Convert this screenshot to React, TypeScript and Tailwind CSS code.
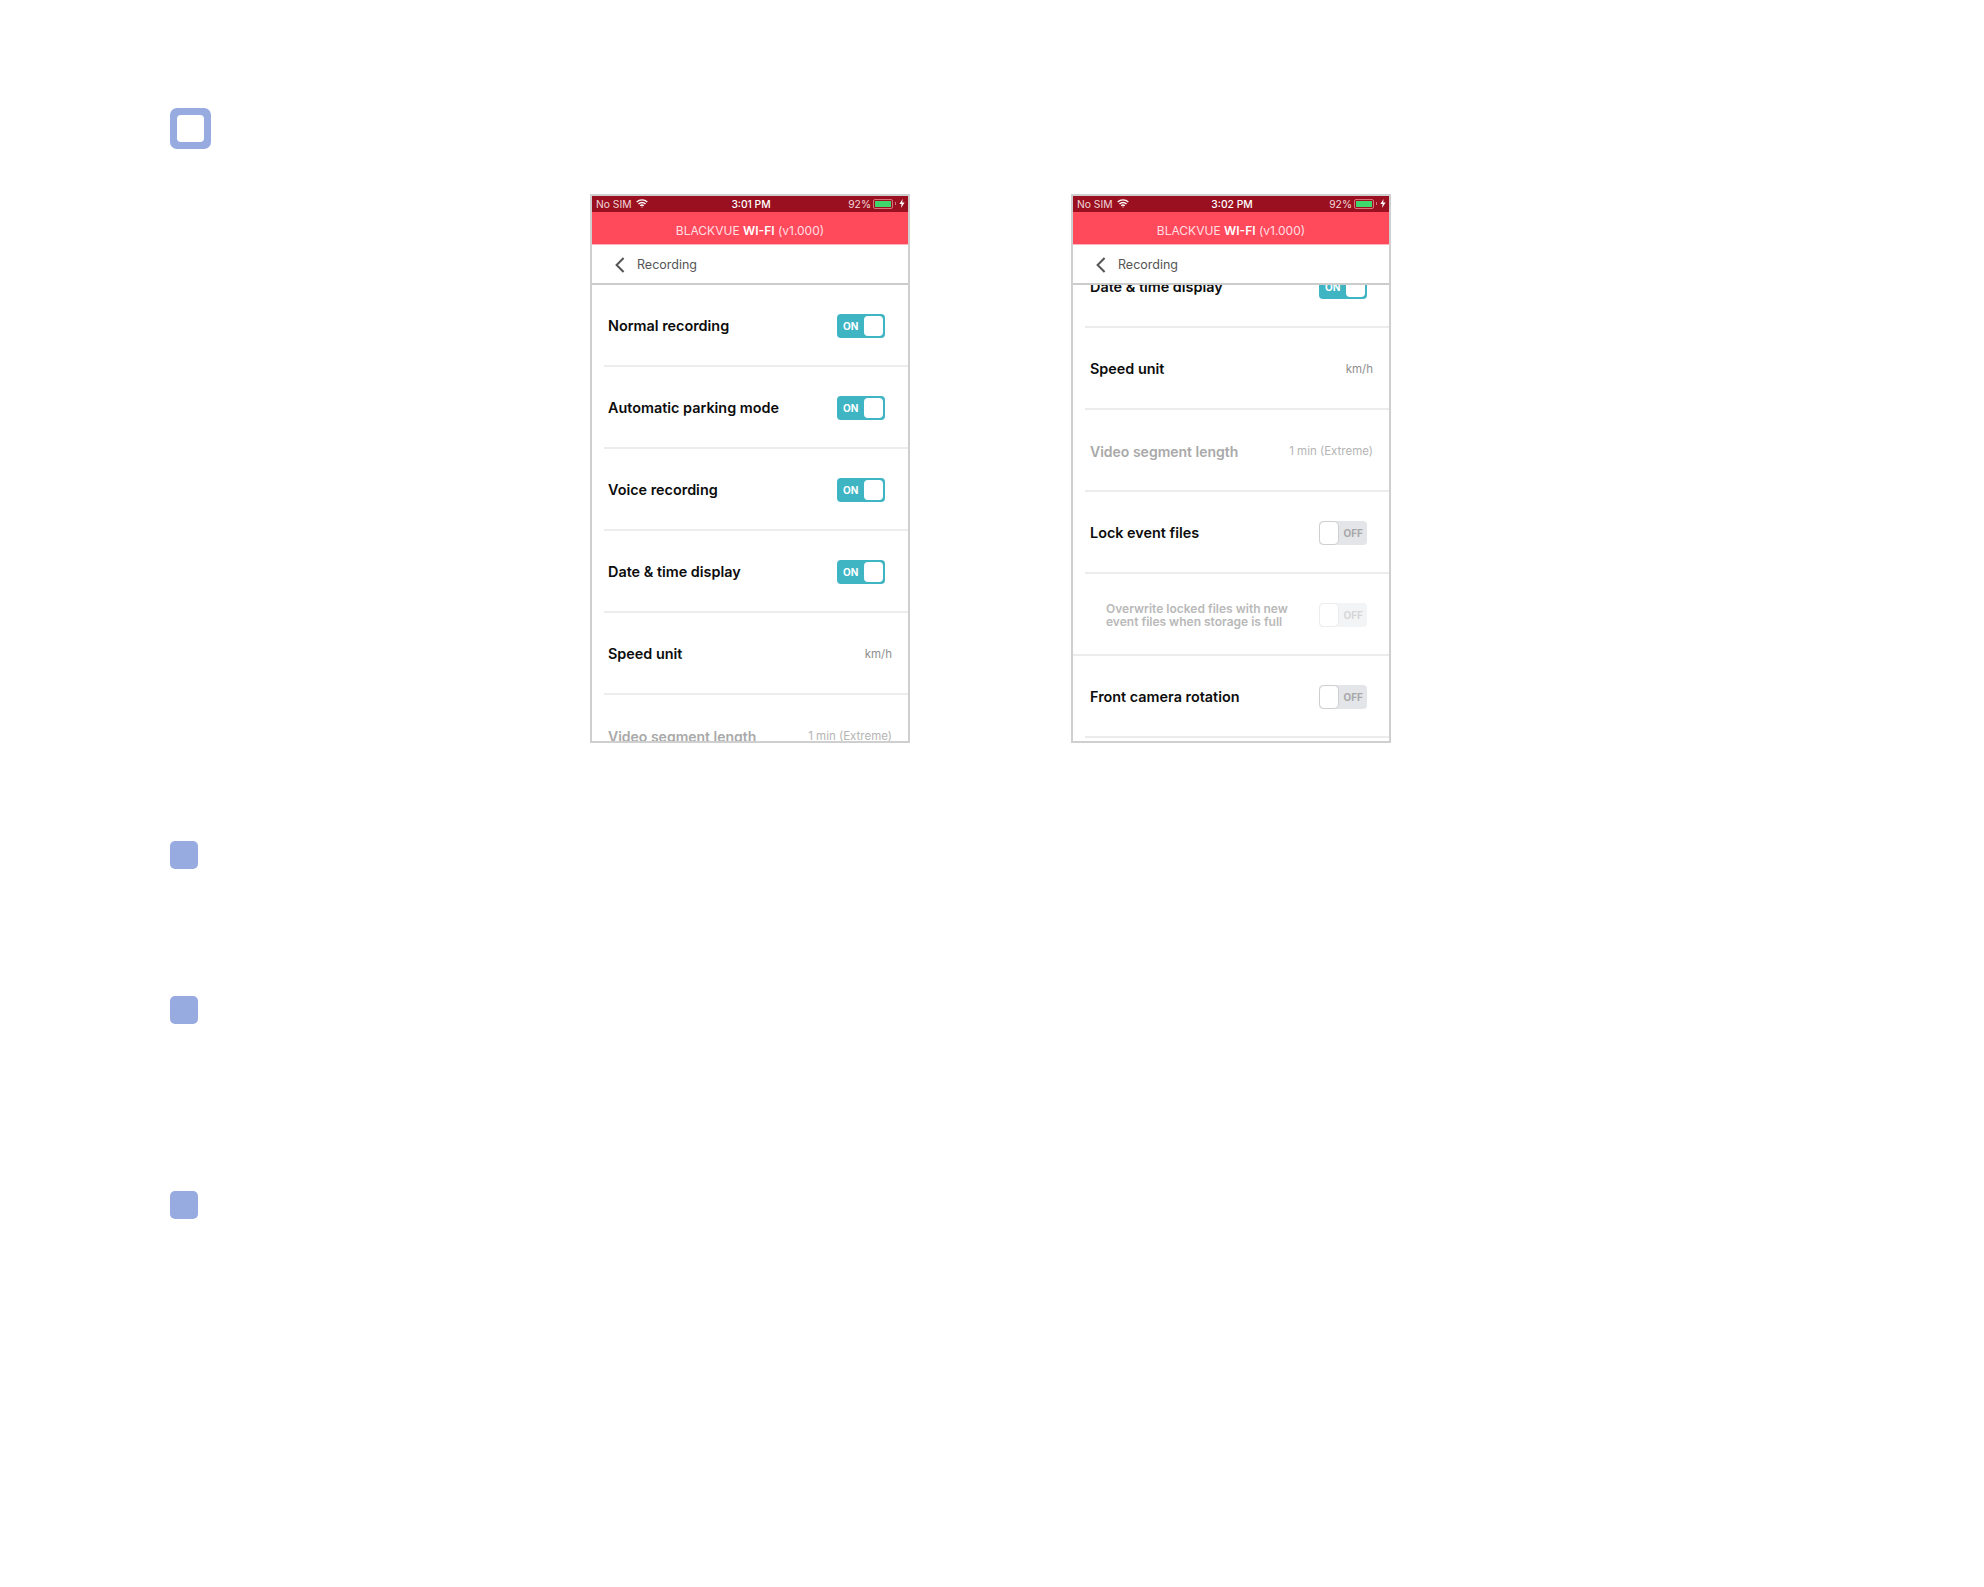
import React from 'react';

function Toggle({ on, dim }: { on: boolean; dim?: boolean }) {
  if (on) {
    return (
      <div className="flex h-6 w-12 shrink-0 items-center justify-between rounded-[4px] bg-[#3fb5c4] p-[2px] pl-[6px]">
        <span className="text-[10px] font-bold leading-none text-white">ON</span>
        <div className="h-5 w-[19px] rounded-[4px] bg-white" />
      </div>
    );
  }
  return (
    <div className={`flex h-6 w-12 shrink-0 items-center justify-between rounded-[4px] pr-[4px] ${dim ? 'bg-[#f3f4f5]' : 'bg-[#e3e5e9]'}`}>
      <div className={`h-6 w-[20px] rounded-[5px] border bg-white ${dim ? 'border-[#ececec]' : 'border-[#cfcfcf]'}`} />
      <span className={`text-[10px] font-bold leading-none ${dim ? 'text-[#d6d6d6]' : 'text-[#a8a8a8]'}`}>OFF</span>
    </div>
  );
}

type RowProps = {
  label: string;
  toggle?: 'on' | 'off' | 'dim';
  value?: string;
  disabled?: boolean;
  shifted?: boolean;
};

function Row({ label, toggle, value, disabled, shifted }: RowProps) {
  return (
    <div className={`relative flex h-[82px] shrink-0 items-center justify-between ${shifted ? 'pl-[17px]' : 'pl-4'}`}>
      <span className={`font-semibold ${disabled ? 'text-[14px] text-[#a9a9a9]' : 'text-[14.4px] text-[#0c0c0c]'}`}>{label}</span>
      {toggle && (
        <div className={shifted ? 'mr-[22px]' : 'mr-[23px]'}>
          <Toggle on={toggle === 'on'} dim={toggle === 'dim'} />
        </div>
      )}
      {value && <span className={`mr-4 pt-px text-[11.5px] ${disabled ? 'text-[#b5b5b5]' : 'text-[#8f8f8f]'}`}>{value}</span>}
      <div className="absolute bottom-0 left-3 right-0 h-[2px] bg-[#ececec]" />
    </div>
  );
}

function StatusBar({ time }: { time: string }) {
  return (
    <div className="relative flex h-4 shrink-0 items-center justify-between bg-[#9b1020] pl-1 pr-[3px] text-[10.3px] leading-none text-[#f2d8db]">
      <div className="flex items-center gap-[4px]">
        <span>No SIM</span>
        <svg width="12" height="9" viewBox="0 0 12 9" fill="none" stroke="#ffffff" strokeWidth="1.4">
          <path d="M0.7 3 C3.7 0.2 8.3 0.2 11.3 3" />
          <path d="M2.5 4.9 C4.5 3.2 7.5 3.2 9.5 4.9" />
          <path d="M4.3 6.7 C5.3 5.9 6.7 5.9 7.7 6.7" />
          <circle cx="6" cy="8" r="0.6" fill="#ffffff" stroke="none" />
        </svg>
      </div>
      <span className="absolute left-[2px] right-0 text-center font-medium text-white">{time}</span>
      <div className="flex items-center gap-[2px]">
        <span>92%</span>
        <div className="flex h-[10px] w-[20px] items-center rounded-[2px] border border-[#d9747f] p-[1px]">
          <div className="h-full w-[16px] bg-[#3fd66b]" />
        </div>
        <div className="mr-[1px] h-[3px] w-[1px] bg-[#d9747f]" />
        <svg width="6" height="9" viewBox="0 0 6 9" fill="#ffffff">
          <path d="M3.6 0 L0.4 5 H2.6 L2 9 L5.6 3.6 H3.2 Z" />
        </svg>
      </div>
    </div>
  );
}

function Phone({ time, scrolled, children }: { time: string; scrolled?: boolean; children: React.ReactNode }) {
  return (
    <div className="flex h-[549px] w-80 shrink-0 flex-col overflow-hidden border-2 border-[#cfcfcf] bg-white">
      <StatusBar time={time} />
      <div className="flex h-[33px] shrink-0 items-center justify-center border-b border-[#ffb3ba] bg-[#ff4a5c] pt-[6px] text-[12px] text-[#ffdfe2]">
        BLACKVUE&nbsp;<span className="font-semibold text-white">WI-FI</span>&nbsp;(v1.000)
      </div>
      <div className="flex h-10 shrink-0 items-center gap-3 border-b-2 border-[#cccccc] pl-[23px] pt-[2px] text-[12.5px] text-[#555555]">
        <svg width="10" height="16" viewBox="0 0 10 16" fill="none" stroke="#555555" strokeWidth="2">
          <path d="M8.6 1 L1.6 8 L8.6 15" />
        </svg>
        <span>Recording</span>
      </div>
      <div className="min-h-0 flex-1 overflow-hidden">
        <div className={`flex flex-col ${scrolled ? '-mt-[39px]' : ''}`}>{children}</div>
      </div>
    </div>
  );
}

function Marker() {
  return <div className="h-7 w-7 rounded-[5px] bg-[#97abe0]" />;
}

export default function App() {
  return (
    <div className="flex min-h-[1587px] flex-col items-start bg-white pl-[170px] pt-[108px] font-['Inter',sans-serif]">
      <div className="flex h-[41px] w-[41px] rounded-[7px] bg-[#97abe0] p-[7px]">
        <div className="flex-1 rounded-[4px] bg-white" />
      </div>

      <div className="ml-[420px] mt-[45px] flex gap-[161px]">
        <Phone time="3:01 PM">
          <Row label="Normal recording" toggle="on" />
          <Row label="Automatic parking mode" toggle="on" />
          <Row label="Voice recording" toggle="on" />
          <Row label="Date & time display" toggle="on" />
          <Row label="Speed unit" value="km/h" />
          <Row label="Video segment length" value="1 min (Extreme)" disabled />
        </Phone>
        <Phone time="3:02 PM" scrolled>
          <Row shifted label="Date & time display" toggle="on" />
          <Row shifted label="Speed unit" value="km/h" />
          <Row shifted label="Video segment length" value="1 min (Extreme)" disabled />
          <Row shifted label="Lock event files" toggle="off" />
          <div className="relative flex h-[82px] shrink-0 items-center justify-between pl-[33px]">
            <span className="text-[12px] font-semibold leading-[13.5px] text-[#b9b9b9]">
              Overwrite locked files with new
              <br />
              event files when storage is full
            </span>
            <div className="mr-[22px]">
              <Toggle on={false} dim />
            </div>
            <div className="absolute bottom-0 left-0 right-0 h-[2px] bg-[#ececec]" />
          </div>
          <Row shifted label="Front camera rotation" toggle="off" />
        </Phone>
      </div>

      <div className="mt-[98px]"><Marker /></div>
      <div className="mt-[127px]"><Marker /></div>
      <div className="mt-[167px]"><Marker /></div>
    </div>
  );
}
